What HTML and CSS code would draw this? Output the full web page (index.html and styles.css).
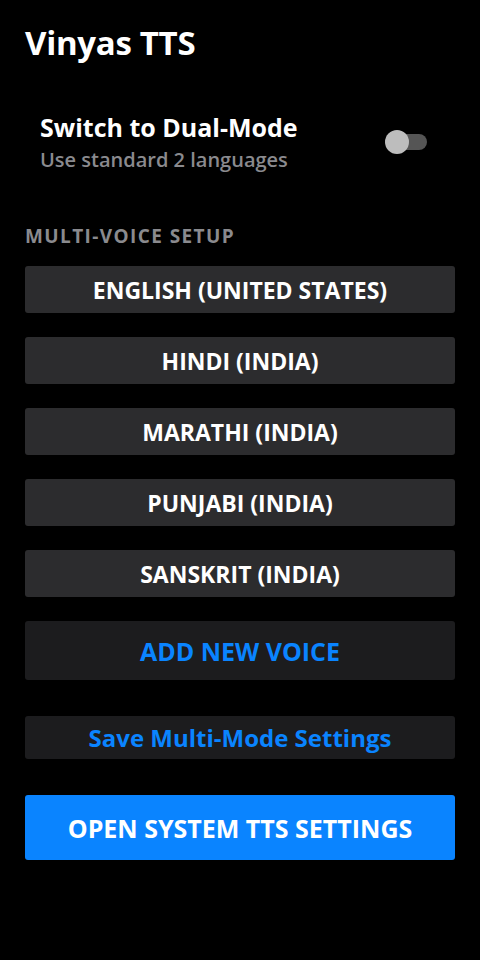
FILE: index.html
```html
<!DOCTYPE html>
<html lang="en">
<head>
    <meta charset="UTF-8">
    <meta name="viewport" content="width=device-width, initial-scale=1.0">
    <title>Vinyas TTS</title>
    <link rel="stylesheet" href="styles.css">
</head>
<body>
    <div class="container">
        <h1>Vinyas TTS</h1>

        <div class="mode-row">
            <div class="mode-text">
                <div class="mode-title">Switch to Dual-Mode</div>
                <div class="mode-sub">Use standard 2 languages</div>
            </div>
            <div class="toggle">
                <span class="track"></span>
                <span class="thumb"></span>
            </div>
        </div>

        <h2>MULTI-VOICE SETUP</h2>
        <div class="voices">
            <button class="voice">ENGLISH (UNITED STATES)</button>
            <button class="voice">HINDI (INDIA)</button>
            <button class="voice">MARATHI (INDIA)</button>
            <button class="voice">PUNJABI (INDIA)</button>
            <button class="voice">SANSKRIT (INDIA)</button>
        </div>

        <button class="add-voice">ADD NEW VOICE</button>
        <button class="save">Save Multi-Mode Settings</button>
        <button class="system">OPEN SYSTEM TTS SETTINGS</button>
    </div>
</body>
</html>
```
FILE: styles.css
```css
body {
    margin: 0;
    background-color: #000;
    font-family: "Open Sans", "Noto Sans", Arial, sans-serif;
    color: #fff;
}
.container {
    padding: 22px 25px 40px 25px;
}
h1 {
    margin: 0;
    font-size: 33px;
    font-weight: 700;
    line-height: 42px;
    letter-spacing: -0.3px;
}
.mode-row {
    display: flex;
    align-items: center;
    justify-content: space-between;
    margin-top: 48px;
    padding: 0 28px 0 15px;
}
.mode-title {
    font-size: 25px;
    font-weight: 700;
    line-height: 30px;
}
.mode-sub {
    font-size: 20px;
    font-weight: 600;
    color: #8a8a8e;
    line-height: 24px;
    margin-top: 6px;
}
.toggle {
    position: relative;
    width: 42px;
    height: 26px;
}
.track {
    position: absolute;
    left: 8px;
    top: 5px;
    width: 34px;
    height: 16px;
    border-radius: 8px;
    background-color: #555;
}
.thumb {
    position: absolute;
    left: 0;
    top: 1px;
    width: 24px;
    height: 24px;
    border-radius: 50%;
    background-color: #bdbdbd;
}
h2 {
    margin: 52px 0 0 0;
    font-size: 19px;
    font-weight: 700;
    letter-spacing: 1.4px;
    color: #8a8a8e;
    line-height: 24px;
}
button {
    display: block;
    width: 100%;
    border: none;
    border-radius: 3px;
    font-family: inherit;
    font-weight: 700;
    cursor: pointer;
}
.voices {
    display: flex;
    flex-direction: column;
    gap: 24px;
    margin-top: 18px;
}
.voice {
    height: 47px;
    background-color: #2c2c2e;
    color: #fff;
    font-size: 23px;
}
.add-voice {
    margin-top: 24px;
    height: 59px;
    background-color: #1c1c1e;
    color: #0a84ff;
    font-size: 25px;
}
.save {
    margin-top: 36px;
    height: 43px;
    background-color: #1c1c1e;
    color: #0a84ff;
    font-size: 24px;
}
.system {
    margin-top: 36px;
    height: 65px;
    background-color: #0a84ff;
    color: #fff;
    font-size: 25px;
}
```
